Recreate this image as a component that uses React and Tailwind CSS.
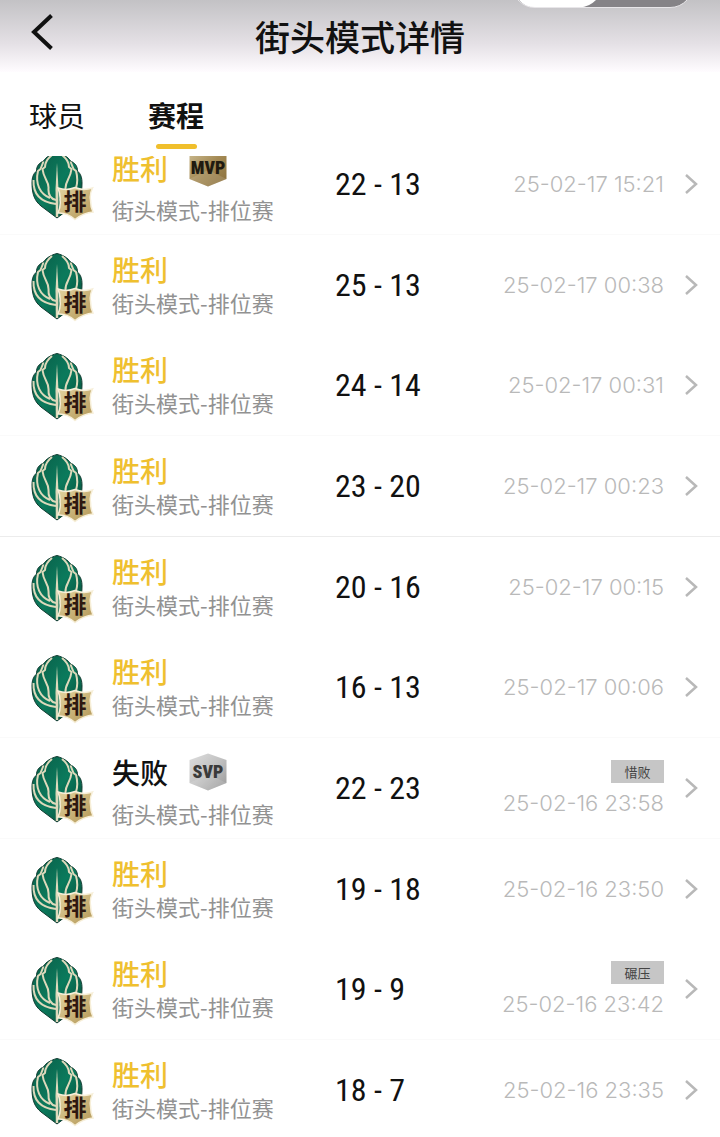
import React from 'react';

const matches = [
    { win: true, award: 'MVP', score: '22 - 13', time: '25-02-17 15:21' },
    { win: true, score: '25 - 13', time: '25-02-17 00:38' },
    { win: true, score: '24 - 14', time: '25-02-17 00:31' },
    { win: true, score: '23 - 20', time: '25-02-17 00:23' },
    { win: true, score: '20 - 16', time: '25-02-17 00:15' },
    { win: true, score: '16 - 13', time: '25-02-17 00:06' },
    { win: false, award: 'SVP', score: '22 - 23', time: '25-02-16 23:58', tag: '惜败' },
    { win: true, score: '19 - 18', time: '25-02-16 23:50' },
    { win: true, score: '19 - 9', time: '25-02-16 23:42', tag: '碾压' },
    { win: true, score: '18 - 7', time: '25-02-16 23:35' },
];

const Emblem = () => (
    <svg className="mt-1 h-[70px] w-16 shrink-0" viewBox="0 0 64 70" aria-hidden="true">
        <defs>
            <linearGradient id="leaf" x1="0" y1="0" x2="1" y2="1">
                <stop offset="0" stopColor="#0a5c47" />
                <stop offset="0.5" stopColor="#0b7a5c" />
                <stop offset="1" stopColor="#064636" />
            </linearGradient>
            <linearGradient id="plate" x1="0" y1="0" x2="1" y2="1">
                <stop offset="0" stopColor="#e3d3a0" />
                <stop offset="1" stopColor="#b39757" />
            </linearGradient>
        </defs>
        {/* Ball */}
        <path
            d="M27 1.500C21 3 16 6 13.500 10C9 12 6.500 15 6.500 20C3 23 2 27 2 32C2 44 5 50 11 55L27 67L43 55C49 50 52 44 52 32C52 27 51 23 47.500 20C47.500 15 45 12 40.500 10C38 6 33 3 27 1.500Z"
            fill="url(#leaf)"
            stroke="#123c31"
            strokeWidth="1"
        />
        <path d="M27 12L28.500 38L28.200 66H25.800L25.500 38Z" fill="#ddd9bb" />
        <g fill="none" stroke="#ddd9bb" strokeWidth="2" strokeLinejoin="round">
            <path d="M22 4C17 8 15 12 15 16L12.500 18C13.500 28 19 30 18.500 37C18 44 21 48 26 49" />
            <path d="M32 4C37 8 39 12 39 16L41.500 18C40.500 28 35 30 35.500 38" />
            <path d="M13.500 10.500L10.500 18L8 20C5 33 10 43 20 47" />
            <path d="M40.500 10.500L43.500 18L46 20C48 27 47.500 32 46 37" />
            <path d="M3.500 29C3 42 9 51 26 53" />
        </g>
        {/* Ranked plate */}
        <path
            d="M28 37Q37 40 45 36.500Q53 40 62.500 37Q59.500 43 60.500 49Q60.500 56 63 61Q54 61.500 45 68.500Q37 61.500 28 62Q31 55 30 49Q30.500 43 28 37Z"
            fill="url(#plate)"
            stroke="#f7efd9"
            strokeWidth="1.500"
        />
        <text
            x="45"
            y="59"
            fontSize="23"
            textAnchor="middle"
            fill="#2e1810"
            className="font-['Noto_Sans_CJK_SC',sans-serif] font-bold"
        >
            排
        </text>
    </svg>
);

const Award = ({ label }) => {
    const gold = label === 'MVP';
    return (
        <svg className="h-[38px] w-[38px] shrink-0" viewBox="0 0 38 38" role="img" aria-label={label}>
            <defs>
                <linearGradient id={label} x1="0" y1="0" x2="1" y2="1">
                    <stop offset="0" stopColor={gold ? '#cdbd93' : '#dedede'} />
                    <stop offset="0.5" stopColor={gold ? '#a48a54' : '#c2c2c2'} />
                    <stop offset="1" stopColor={gold ? '#8a6f3c' : '#999999'} />
                </linearGradient>
            </defs>
            <path d="M19 0.500L37.500 7V30L19 37.500L0.500 30V7Z" fill={`url(#${label})`} />
            <path d="M0.500 30L19 21L37.500 30L19 37.500Z" fill="#ffffff" opacity="0.120" />
            <text
                x="19"
                y="25"
                fontSize="18"
                textAnchor="middle"
                fill={gold ? '#201a10' : '#3a3a3a'}
                className="font-['Roboto_Condensed','Roboto',sans-serif] font-black"
            >
                {label}
            </text>
        </svg>
    );
};

const MatchRow = ({ match }) => (
    <li className="border-[#fafafa] nth-4:border-[#ececec] [&:not(:nth-child(3n+2))]:border-b">
        <a href="#match" className="flex h-[100px] items-center pr-[22px] pl-[30px]">
            <Emblem />
            <div className="ml-[18px] w-[223px] shrink-0">
                <div className={`flex items-center gap-[21px] text-[28px] font-medium ${match.award ? 'h-[50px]' : 'h-[34px]'} ${match.win ? 'text-[#efc02f]' : 'text-[#111111]'}`}>
                    <span className="leading-8">{match.win ? '胜利' : '失败'}</span>
                    {match.award && <Award label={match.award} />}
                </div>
                <p className="text-[22px] leading-8 whitespace-nowrap text-[#929292]">街头模式-排位赛</p>
            </div>
            <span className="font-['Roboto_Condensed','Roboto',sans-serif] text-[32px] leading-10 whitespace-nowrap text-[#111111]">
                {match.score}
            </span>
            <div className="ml-auto flex flex-col items-end gap-2">
                {match.tag && (
                    <span className="flex h-[23px] w-[53px] items-center justify-center bg-[#c6c6c6] text-[13px] text-[#444444]">
                        {match.tag}
                    </span>
                )}
                <time className="font-['Inter',sans-serif] text-[22px] leading-[25px] font-light whitespace-nowrap text-[#b9b9b9]">
                    {match.time}
                </time>
            </div>
            <svg className="ml-5 h-5 w-3.5 shrink-0" viewBox="0 0 14 20" fill="none" stroke="#b8b8b8" strokeWidth="2.500" aria-hidden="true">
                <path d="M2 1L12 10L2 19" />
            </svg>
        </a>
    </li>
);

const Header = () => (
    <header className="relative shrink-0 bg-linear-to-b from-[#c3c2c5] via-[#e4e0e5] via-60% to-[#fffcff]">
        {/* Mini program capsule */}
        <svg className="absolute top-0 right-8 h-2 w-[170px]" viewBox="0 0 170 8" aria-hidden="true">
            <path d="M0 0Q7 7.500 17 7.500H152Q162 7.500 169 0Z" fill="#858387" />
            <path d="M1 0Q7 7.500 17 7.500H62Q71 7 78 0Z" fill="#ffffff" />
            <path d="M0 0Q7 7.500 17 7.500H152Q162 7.500 169 0" fill="none" stroke="#e8e6e9" />
        </svg>
        <div className="flex h-[72px] items-center justify-center">
            <button type="button" aria-label="返回" className="absolute left-[30px]">
                <svg className="-mt-2 h-9 w-6" viewBox="0 0 24 36" fill="none" stroke="#111111" strokeWidth="4" aria-hidden="true">
                    <path d="M21.500 1.500L4 18L21.500 34.500" />
                </svg>
            </button>
            <h1 className="text-[35px] leading-10 font-medium">街头模式详情</h1>
        </div>
    </header>
);

const Tabs = () => (
    <nav className="flex h-[84px] shrink-0 gap-[63px] pt-[22px] pl-[29px] text-[28px] leading-[42px]">
        <button type="button" className="self-start">球员</button>
        <button type="button" aria-current="page" className="flex flex-col items-center gap-2 self-start font-bold">
            赛程
            <span className="h-[5px] w-[41px] rounded-sm bg-[#f0bf2c]" />
        </button>
    </nav>
);

const App = () => (
    <div className="flex h-screen flex-col overflow-hidden bg-white font-['Noto_Sans_CJK_SC',sans-serif] text-[#111111]">
        <Header />
        <Tabs />
        {/* Match list, scrolled a little under the tabs */}
        <main className="min-h-0 flex-1 overflow-hidden">
            <ul className="-mt-[22px]">
                {matches.map((match) => (
                    <MatchRow key={match.time} match={match} />
                ))}
            </ul>
        </main>
    </div>
);

export default App;
